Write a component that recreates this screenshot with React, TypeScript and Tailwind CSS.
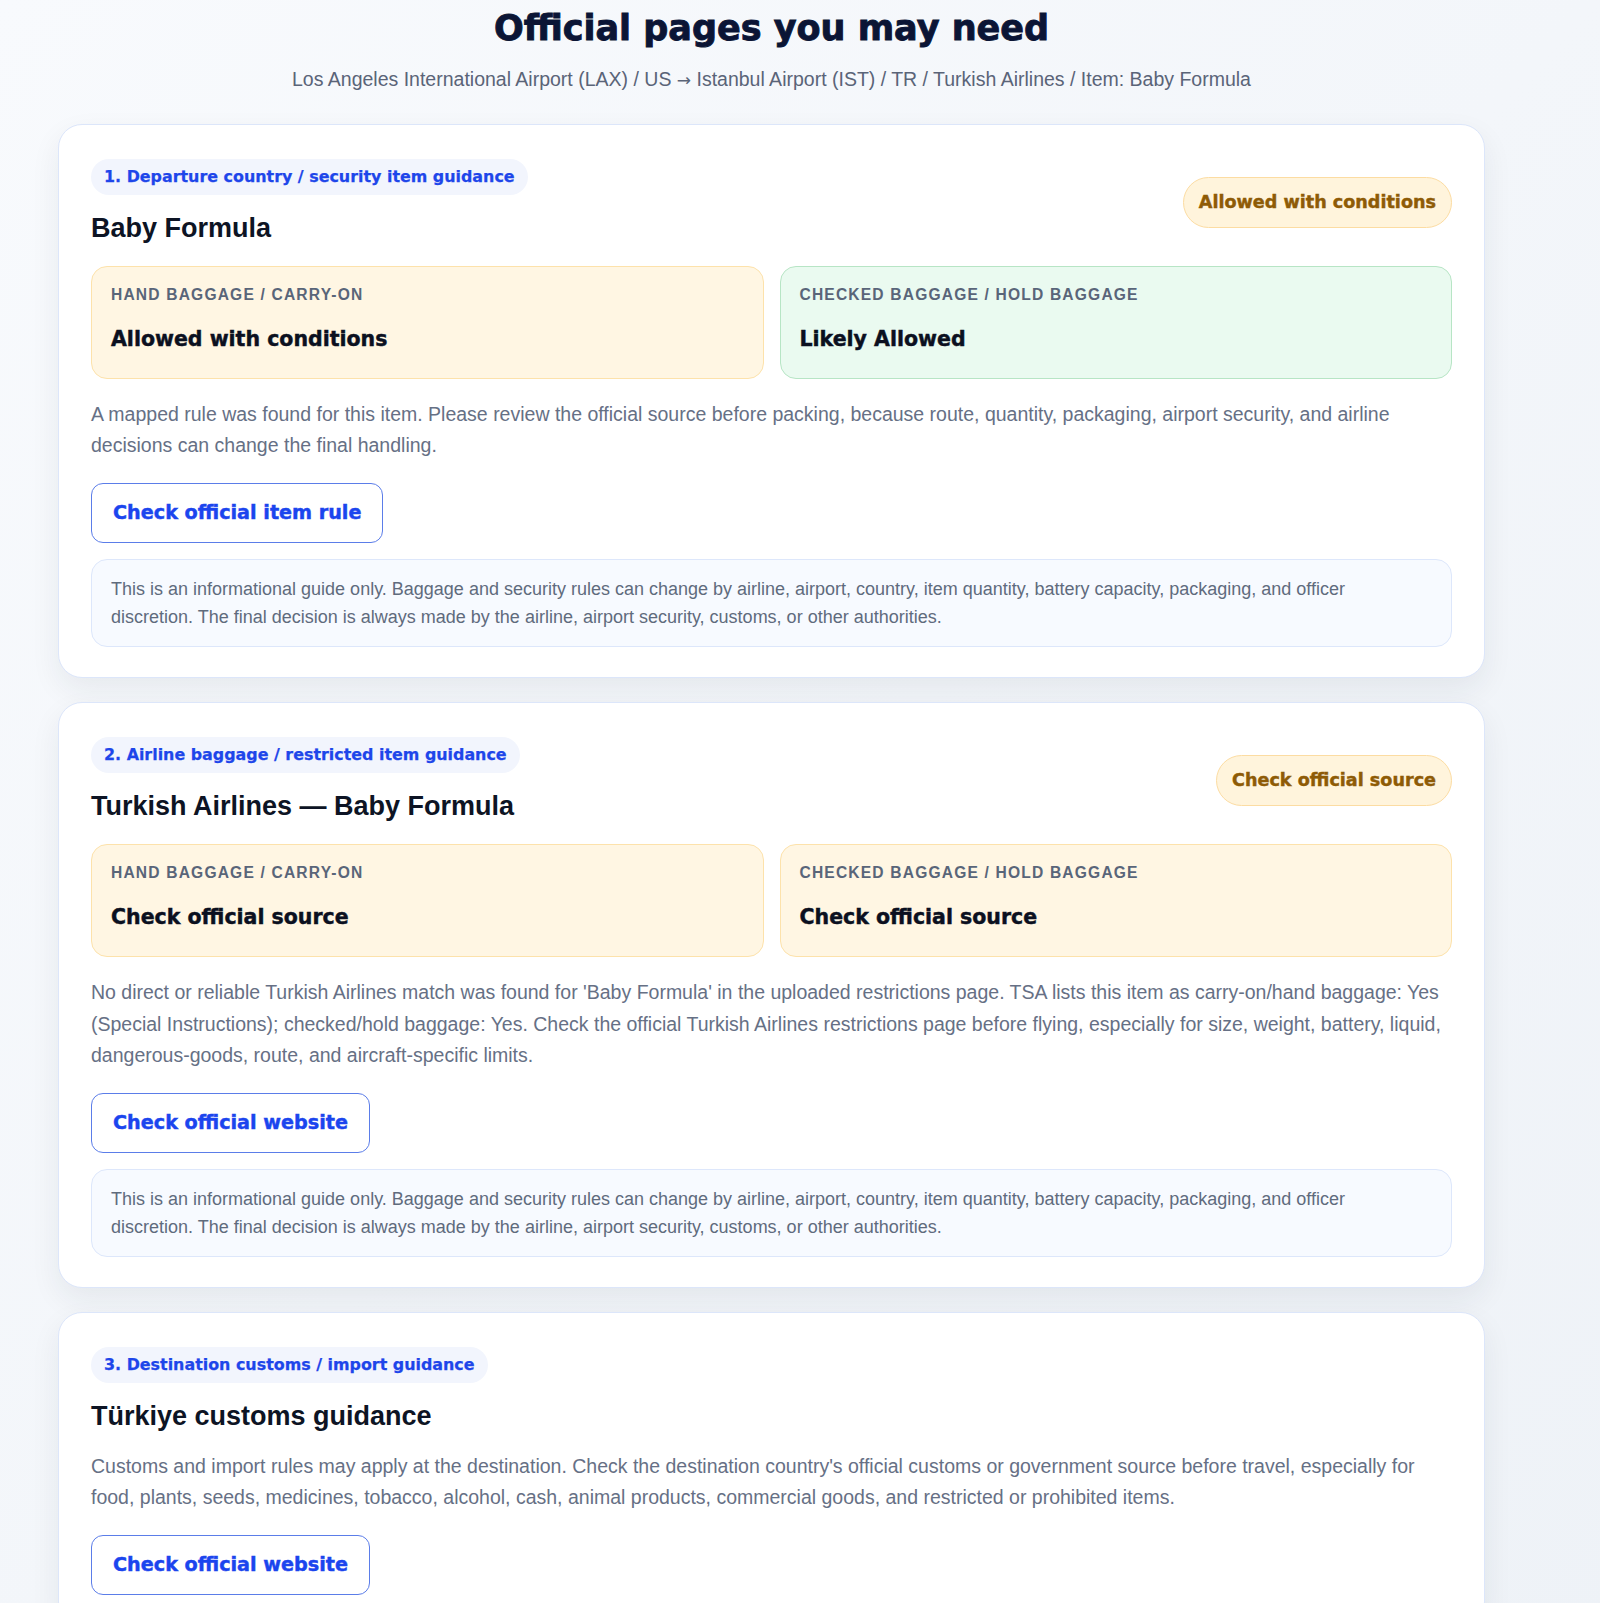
import React from 'react';

type Tone = 'amber' | 'green';

interface StatusBox {
    label: string;
    value: string;
    tone: Tone;
}

interface Section {
    tag: string;
    title: string;
    badge?: string;
    boxes?: StatusBox[];
    text: string;
    button: string;
    disclaimer?: boolean;
}

const DISCLAIMER =
    'This is an informational guide only. Baggage and security rules can change by airline, airport, country, item quantity, battery capacity, packaging, and officer discretion. The final decision is always made by the airline, airport security, customs, or other authorities.';

const sections: Section[] = [
    {
        tag: '1. Departure country / security item guidance',
        title: 'Baby Formula',
        badge: 'Allowed with conditions',
        boxes: [
            { label: 'Hand baggage / carry-on', value: 'Allowed with conditions', tone: 'amber' },
            { label: 'Checked baggage / hold baggage', value: 'Likely Allowed', tone: 'green' },
        ],
        text: 'A mapped rule was found for this item. Please review the official source before packing, because route, quantity, packaging, airport security, and airline decisions can change the final handling.',
        button: 'Check official item rule',
        disclaimer: true,
    },
    {
        tag: '2. Airline baggage / restricted item guidance',
        title: 'Turkish Airlines — Baby Formula',
        badge: 'Check official source',
        boxes: [
            { label: 'Hand baggage / carry-on', value: 'Check official source', tone: 'amber' },
            { label: 'Checked baggage / hold baggage', value: 'Check official source', tone: 'amber' },
        ],
        text: "No direct or reliable Turkish Airlines match was found for 'Baby Formula' in the uploaded restrictions page. TSA lists this item as carry-on/hand baggage: Yes (Special Instructions); checked/hold baggage: Yes. Check the official Turkish Airlines restrictions page before flying, especially for size, weight, battery, liquid, dangerous-goods, route, and aircraft-specific limits.",
        button: 'Check official website',
        disclaimer: true,
    },
    {
        tag: '3. Destination customs / import guidance',
        title: 'Türkiye customs guidance',
        text: "Customs and import rules may apply at the destination. Check the destination country's official customs or government source before travel, especially for food, plants, seeds, medicines, tobacco, alcohol, cash, animal products, commercial goods, and restricted or prohibited items.",
        button: 'Check official website',
    },
];

const boxTone: Record<Tone, string> = {
    amber: 'bg-[#fff6e3] border-[#fde2ab]',
    green: 'bg-[#eafaf0] border-[#b7e5c5]',
};

// heavy (black weight) text
const heavy = "font-['DejaVu_Sans',sans-serif] font-bold [-webkit-text-stroke:0.45px_currentColor]";

const GuidanceCard: React.FC<{ section: Section }> = ({ section }) => {
    return (
        <div className="rounded-[24px] border border-[#dce6fa] bg-white px-8 pt-[34px] pb-[30px] shadow-[0_12px_30px_rgba(30,41,59,0.07)]">
            <div className="flex items-center justify-between">
                <div className="flex flex-col items-start">
                    <span className="inline-flex h-9 items-center rounded-full bg-[#f2f5fd] px-[13px] text-[15.9px] text-[#1e46ea] font-['DejaVu_Sans',sans-serif] font-bold [-webkit-text-stroke:0.25px_currentColor]">
                        {section.tag}
                    </span>
                    <h2 className="mt-[16px] text-[27px] leading-[34px] font-bold text-[#0d1424]">{section.title}</h2>
                </div>
                {section.badge && (
                    <span className={`inline-flex h-[51px] items-center rounded-full border border-[#fcdca2] bg-[#fff4dc] px-[15px] text-[17.6px] text-[#8e5b06] ${heavy}`}>
                        {section.badge}
                    </span>
                )}
            </div>

            {section.boxes && (
                <div className="mt-[21px] grid grid-cols-2 gap-4">
                    {section.boxes.map((box, i) => (
                        <div key={i} className={`rounded-[16px] border px-[19px] pt-[18px] pb-[25px] ${boxTone[box.tone]}`}>
                            <div className="text-[15.6px] leading-5 font-bold uppercase tracking-[0.075em] text-[#596579]">{box.label}</div>
                            <div className={`mt-5 text-[20.5px] leading-7 text-[#0b1020] ${heavy}`}>{box.value}</div>
                        </div>
                    ))}
                </div>
            )}

            <p className={`${section.boxes ? 'mt-[20px]' : 'mt-[18px]'} text-[19.5px] leading-[31.2px] text-[#667085]`}>{section.text}</p>

            <button className={`mt-[22px] flex h-[60px] items-center rounded-[12px] border-[1.5px] border-[#5b7de9] bg-white px-[21px] text-[19.2px] text-[#1b45ee] ${heavy}`}>
                {section.button}
            </button>

            {section.disclaimer && (
                <div className="mt-[16px] rounded-[16px] border border-[#dde7fb] bg-[#f7faff] py-[15px] pl-[19px] pr-[48px] text-[18px] leading-[28px] text-[#5f6b7d]">
                    {DISCLAIMER}
                </div>
            )}
        </div>
    );
};

export default function App() {
    return (
        <div className="min-h-screen bg-gradient-to-br from-[#f8fafd] via-[#f3f6fa] to-[#eef2f7] pb-10 font-['Liberation_Sans','DejaVu_Sans',Arial,sans-serif]">
            <div className="ml-[58px] w-[1427px] pt-[6px]">
                <h1 className="text-center text-[35px] leading-[44px] text-[#0b1535] font-['DejaVu_Sans',sans-serif] font-bold [-webkit-text-stroke:0.9px_currentColor]">
                    Official pages you may need
                </h1>
                <p className="mt-[15px] text-center text-[19.5px] leading-[28px] text-[#5a6478]">
                    Los Angeles International Airport (LAX) / US <span className="font-['DejaVu_Sans',sans-serif] text-[17px]">→</span> Istanbul Airport (IST) / TR / Turkish Airlines / Item: Baby Formula
                </p>
                <div className="mt-[30px] flex flex-col gap-6">
                    {sections.map((s, i) => (
                        <GuidanceCard key={i} section={s} />
                    ))}
                </div>
            </div>
        </div>
    );
}
